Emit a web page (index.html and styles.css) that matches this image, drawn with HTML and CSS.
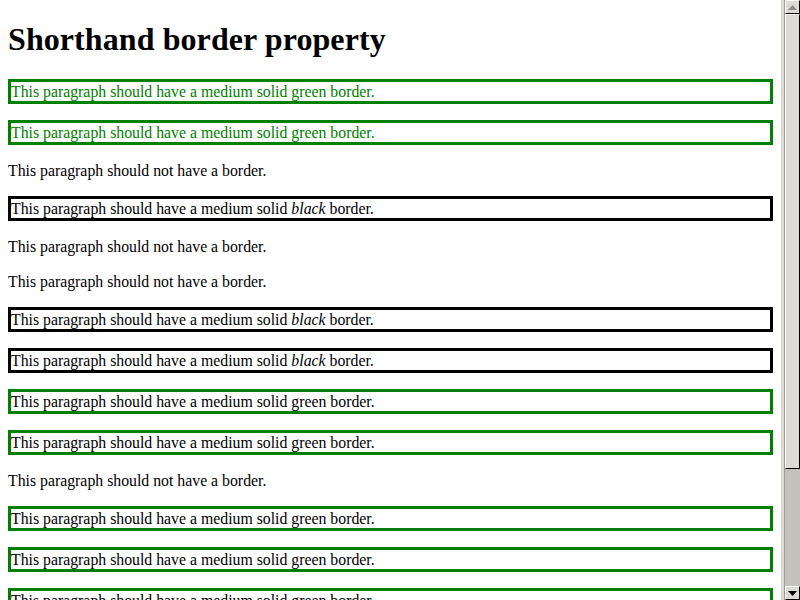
FILE: index.html
```html
<!DOCTYPE html>
<html>
<head>
<meta charset="utf-8">
<title>Shorthand border property</title>
<link rel="stylesheet" href="styles.css">
</head>
<body>
<h1>Shorthand border property</h1>
<p class="green-text">This paragraph should have a medium solid green border.</p>
<p class="green-text">This paragraph should have a medium solid green border.</p>
<p>This paragraph should not have a border.</p>
<p class="black">This paragraph should have a medium solid <em>black</em> border.</p>
<p>This paragraph should not have a border.</p>
<p>This paragraph should not have a border.</p>
<p class="black">This paragraph should have a medium solid <em>black</em> border.</p>
<p class="black">This paragraph should have a medium solid <em>black</em> border.</p>
<p class="green">This paragraph should have a medium solid green border.</p>
<p class="green">This paragraph should have a medium solid green border.</p>
<p>This paragraph should not have a border.</p>
<p class="green">This paragraph should have a medium solid green border.</p>
<p class="green">This paragraph should have a medium solid green border.</p>
<p class="green">This paragraph should have a medium solid green border.</p>
<p class="green">This paragraph should have a medium solid green border.</p>

<div class="scrollbar" aria-hidden="true">
  <div class="sb-gutter"></div>
  <div class="sb-line"></div>
  <div class="sb-col">
    <div class="sb-btn">
      <svg width="9" height="5" viewBox="0 0 9 5"><path d="M4.5 0 L9 5 L0 5 Z" fill="#8c8a86"/></svg>
    </div>
    <div class="sb-thumb"></div>
    <div class="sb-track"></div>
    <div class="sb-btn">
      <svg width="9" height="5" viewBox="0 0 9 5"><path d="M0 0 L9 0 L4.5 5 Z" fill="#000"/></svg>
    </div>
  </div>
</div>
</body>
</html>
```
FILE: styles.css
```css
html {
  font-family: "Liberation Serif", "Times New Roman", serif;
  color: #000;
  background: #fff;
  overflow: hidden;
}
body {
  margin: 0 27px 0 8px;
  padding-top: 21px;
}
h1 {
  font-size: 32px;
  line-height: 37px;
  font-weight: bold;
  margin: 0 0 21px;
  letter-spacing: 0.08px;
}
p {
  font-size: 15.8px;
  line-height: 19px;
  margin: 16px 0;
}
h1 + p {
  margin-top: 0;
}
.green-text {
  color: green;
  border: 3px solid;
}
.black {
  border: 3px solid black;
}
.green {
  border: 3px solid green;
}

.scrollbar {
  position: fixed;
  top: 0;
  right: 0;
  width: 19px;
  height: 600px;
  display: flex;
  background: #dcdad5;
}
.sb-gutter {
  width: 3px;
  background: #dcdad5;
}
.sb-line {
  width: 1px;
  background: #9d9b96;
}
.sb-col {
  flex: 1;
  display: flex;
  flex-direction: column;
  background: #c3c1bb;
}
.sb-btn {
  height: 14px;
  flex: none;
  box-sizing: border-box;
  background: #dcdad5;
  border-top: 1px solid #fff;
  border-left: 1px solid #fff;
  border-right: 1px solid #000;
  border-bottom: 1px solid #000;
  display: flex;
  align-items: center;
  justify-content: center;
}
.sb-thumb {
  height: 455px;
  flex: none;
  box-sizing: border-box;
  background: #dcdad5;
  border-top: 1px solid #fff;
  border-left: 1px solid #fff;
  border-right: 1px solid #000;
  border-bottom: 1px solid #000;
}
.sb-track {
  flex: 1;
  background: #c3c1bb;
}
```
